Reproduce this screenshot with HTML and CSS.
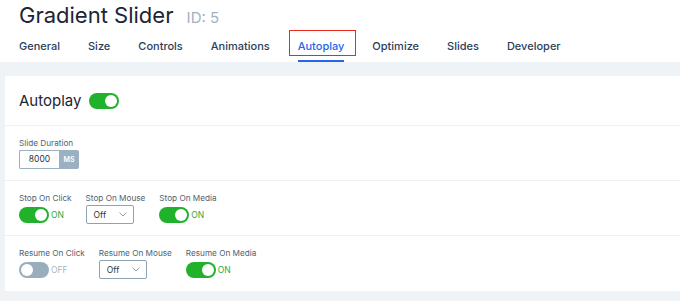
FILE: index.html
```html
<!DOCTYPE html>
<html lang="en">
<head>
    <meta charset="UTF-8">
    <meta name="viewport" content="width=device-width, initial-scale=1.0">
    <title>Gradient Slider - Autoplay</title>
    <link rel="stylesheet" href="styles.css">
</head>
<body>
    <div class="header">
        <h1 class="title">Gradient Slider <span class="slider-id">ID: 5</span></h1>
        <nav class="tabs">
            <a class="tab">General</a>
            <a class="tab">Size</a>
            <a class="tab">Controls</a>
            <a class="tab">Animations</a>
            <a class="tab active">Autoplay</a>
            <a class="tab">Optimize</a>
            <a class="tab">Slides</a>
            <a class="tab">Developer</a>
        </nav>
    </div>

    <div class="page">
        <div class="card">
            <div class="section head-row">
                <h2 class="heading">Autoplay</h2>
                <span class="toggle on"><span class="knob"></span></span>
            </div>

            <div class="section">
                <div class="field">
                    <label class="label">Slide Duration</label>
                    <div class="number">
                        <span class="number-value">8000</span>
                        <span class="number-unit">MS</span>
                    </div>
                </div>
            </div>

            <div class="section fields">
                <div class="field">
                    <label class="label">Stop On Click</label>
                    <div class="control">
                        <span class="toggle on"><span class="knob"></span></span>
                        <span class="state on">ON</span>
                    </div>
                </div>
                <div class="field">
                    <label class="label">Stop On Mouse</label>
                    <div class="control">
                        <div class="select">
                            <span>Off</span>
                            <svg width="8" height="5" viewBox="0 0 8 5"><path d="M0.5 0.5 L4 4 L7.5 0.5" fill="none" stroke="#7f93a4" stroke-width="0.9"/></svg>
                        </div>
                    </div>
                </div>
                <div class="field">
                    <label class="label">Stop On Media</label>
                    <div class="control">
                        <span class="toggle on"><span class="knob"></span></span>
                        <span class="state on">ON</span>
                    </div>
                </div>
            </div>

            <div class="section fields last">
                <div class="field">
                    <label class="label">Resume On Click</label>
                    <div class="control">
                        <span class="toggle"><span class="knob"></span></span>
                        <span class="state">OFF</span>
                    </div>
                </div>
                <div class="field">
                    <label class="label">Resume On Mouse</label>
                    <div class="control">
                        <div class="select">
                            <span>Off</span>
                            <svg width="8" height="5" viewBox="0 0 8 5"><path d="M0.5 0.5 L4 4 L7.5 0.5" fill="none" stroke="#7f93a4" stroke-width="0.9"/></svg>
                        </div>
                    </div>
                </div>
                <div class="field">
                    <label class="label">Resume On Media</label>
                    <div class="control">
                        <span class="toggle on"><span class="knob"></span></span>
                        <span class="state on">ON</span>
                    </div>
                </div>
            </div>
        </div>
    </div>
</body>
</html>
```

FILE: styles.css
```css
html, body {
    margin: 0;
    height: 100%;
}
body {
    font-family: Inter, "Noto Sans", sans-serif;
    background-color: #f0f3f6;
    color: #1d2433;
    overflow: hidden;
}
.header {
    background-color: #fff;
    height: 62px;
    padding: 0 19px;
    box-sizing: border-box;
}
.title {
    margin: 0;
    padding-top: 2px;
    font-size: 22px;
    font-weight: 400;
    line-height: 26px;
    color: #1d2433;
}
.slider-id {
    margin-left: 7px;
    font-size: 15px;
    color: #9fb2c2;
}
.tabs {
    display: flex;
    gap: 28px;
    margin-top: 7px;
}
.tab {
    position: relative;
    font-size: 11px;
    font-weight: 500;
    line-height: 16px;
    color: #2c3e58;
    padding-bottom: 6px;
    border-bottom: 2px solid transparent;
}
.tab.active {
    color: #2566e8;
    border-bottom-color: #2566e8;
}
.tab.active::after {
    content: "";
    position: absolute;
    left: -9px;
    right: -12px;
    top: -8px;
    height: 24px;
    border: 1px solid #ee2a1e;
}
.page {
    padding: 14px 0 0 5px;
}
.card {
    background-color: #fff;
    margin-right: -20px;
}
.section {
    padding: 12px 14px 0;
    border-bottom: 1px solid #eff2f5;
    height: 55px;
    box-sizing: border-box;
}
.section.last {
    border-bottom: none;
}
.head-row {
    display: flex;
    align-items: center;
    gap: 8px;
    padding-top: 0;
    height: 50px;
}
.heading {
    margin: 0;
    font-size: 15px;
    font-weight: 400;
    color: #1d2433;
}
.fields {
    display: flex;
    gap: 14px;
}
.field {
    display: flex;
    flex-direction: column;
}
.label {
    font-size: 8.2px;
    line-height: 11px;
    color: #4f5f73;
    margin-bottom: 1px;
    white-space: nowrap;
}
.control {
    display: flex;
    align-items: center;
    height: 19px;
}
.toggle {
    display: flex;
    align-items: center;
    width: 30px;
    height: 16px;
    border-radius: 8px;
    background-color: #99aebd;
    padding: 0 2px;
    box-sizing: border-box;
}
.toggle.on {
    background-color: #21b22c;
    justify-content: flex-end;
}
.knob {
    width: 12px;
    height: 12px;
    border-radius: 50%;
    background-color: #fff;
}
.state {
    margin-left: 2px;
    font-size: 8.5px;
    color: #a6b6c3;
}
.state.on {
    color: #2aa836;
}
.number {
    display: flex;
    height: 19px;
    width: 60px;
}
.number-value {
    flex: 1;
    border: 1px solid #9bb0c1;
    border-right: none;
    border-radius: 2px 0 0 2px;
    font-size: 8.5px;
    line-height: 17px;
    text-align: center;
    color: #2a3444;
}
.number-unit {
    width: 20px;
    background-color: #9bb0c1;
    border-radius: 0 2px 2px 0;
    color: #fff;
    font-size: 7px;
    font-weight: 600;
    line-height: 19px;
    text-align: center;
}
.select {
    display: flex;
    align-items: center;
    justify-content: space-between;
    width: 48px;
    height: 19px;
    border: 1px solid #8ea4b5;
    border-radius: 2px;
    box-sizing: border-box;
    padding: 0 6px 0 7px;
    font-size: 8.5px;
    color: #2a3444;
}
```
